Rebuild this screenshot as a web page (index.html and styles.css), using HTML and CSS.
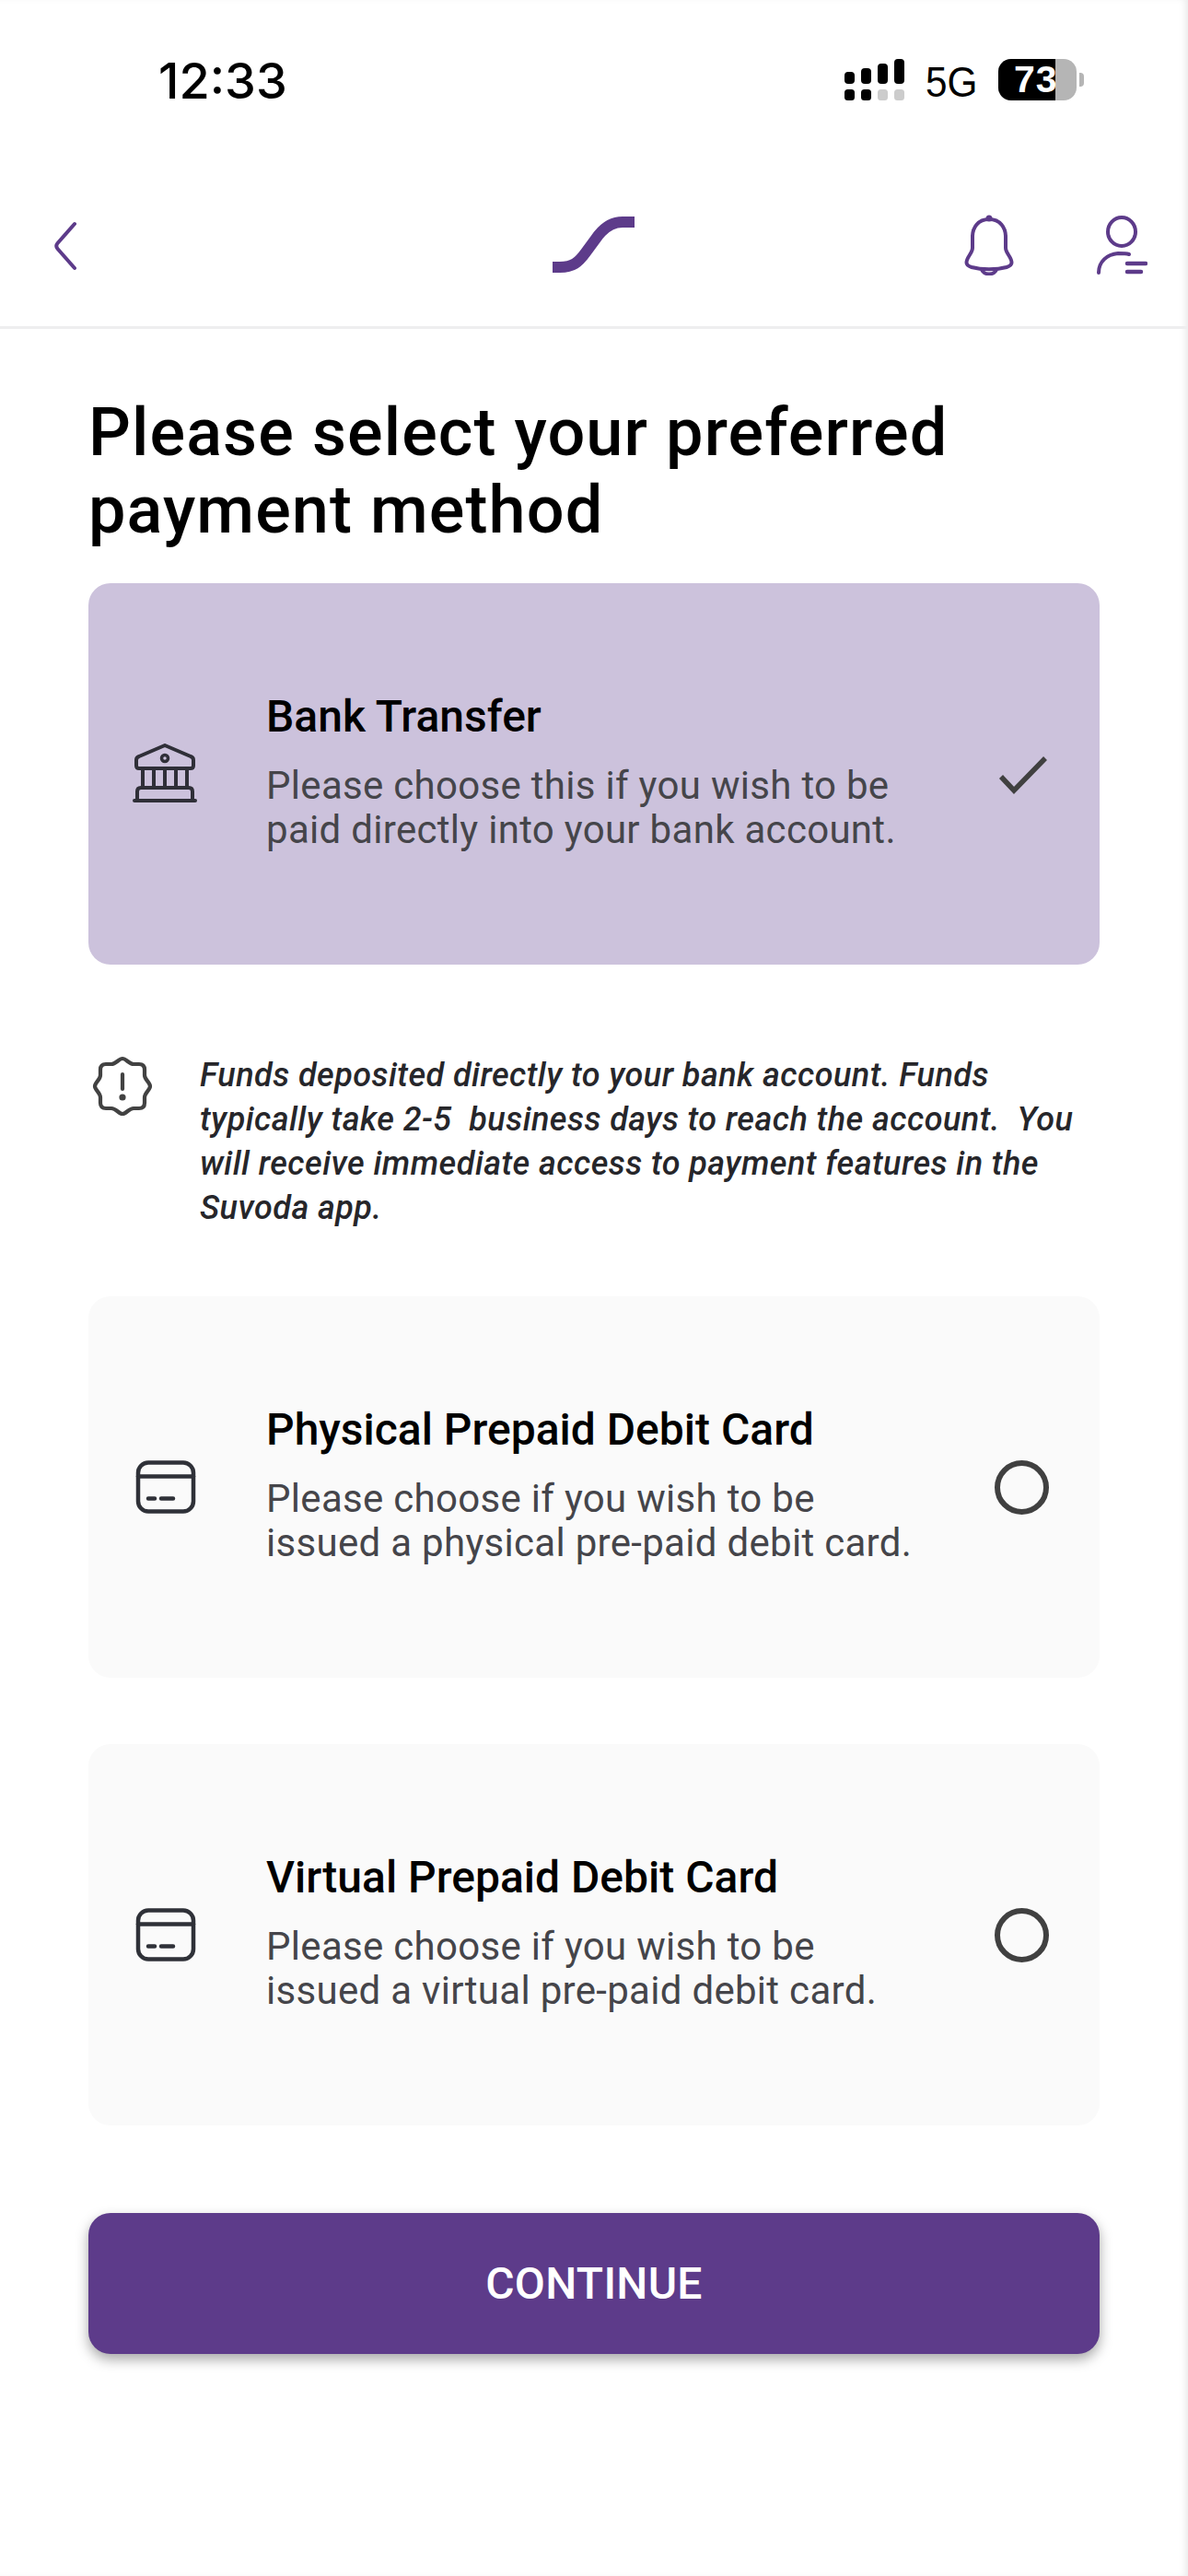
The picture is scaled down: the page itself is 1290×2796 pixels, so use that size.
FILE: index.html
```html
<!DOCTYPE html>
<html lang="en">
<head>
<meta charset="utf-8">
<title>Payment method</title>
<link rel="stylesheet" href="styles.css">
</head>
<body>
<div class="screen">
  <div class="statusbar">
    <span class="time">12:33</span>
    <div class="status-right">
      <svg class="signal" width="65" height="45" viewBox="0 0 65 45">
        <rect x="0" y="14" width="11" height="13" rx="4" fill="#000"/>
        <rect x="18" y="10" width="11" height="17" rx="4" fill="#000"/>
        <rect x="36" y="5" width="11" height="22" rx="4" fill="#000"/>
        <rect x="54" y="0" width="11" height="27" rx="4" fill="#000"/>
        <rect x="0" y="33" width="11" height="12" rx="3.500" fill="#000"/>
        <rect x="18" y="33" width="11" height="12" rx="3.500" fill="#000"/>
        <rect x="36" y="33" width="11" height="12" rx="3.500" fill="#ccc"/>
        <rect x="54" y="33" width="11" height="12" rx="3.500" fill="#ccc"/>
      </svg>
      <span class="net">5G</span>
      <div class="battery">
        <div class="battery-body"><span class="battery-fill"></span><span class="battery-text">73</span></div>
        <span class="battery-cap"></span>
      </div>
    </div>
  </div>
  <header class="nav">
    <svg class="back" width="30" height="60" viewBox="0 0 30 60"><path d="M26 6 L7.500 27 Q5 30 7.500 33 L26 54" fill="none" stroke="#5d3b8a" stroke-width="4" stroke-linecap="round"/></svg>
    <svg class="logo" width="90" height="62" viewBox="0 0 90 62"><path d="M0 55 H8 C22 55 28 50 36 39 L50 20 C58 10 66 6 76 6 H89" fill="none" stroke="#5d3b8a" stroke-width="12"/></svg>
    <div class="nav-actions">
      <svg class="bell" width="56" height="66" viewBox="0 0 56 66"><path d="M28 5 C16 5 10 14 10 24 V36 C10 42 3.500 46 3.500 52 C3.500 55 6 56 9 57 C20 60 36 60 47 57 C50 56 52.500 55 52.500 52 C52.500 46 46 42 46 36 V24 C46 14 40 5 28 5 Z" fill="none" stroke="#5d3b8a" stroke-width="4" stroke-linejoin="round"/><path d="M19.500 58 C21 66.500 35 66.500 36.500 58" fill="none" stroke="#5d3b8a" stroke-width="4"/><circle cx="28" cy="4" r="3.500" fill="#5d3b8a"/></svg>
      <svg class="person" width="56" height="66" viewBox="0 0 56 66"><ellipse cx="28" cy="18.500" rx="15" ry="15.500" fill="none" stroke="#5d3b8a" stroke-width="4"/><path d="M3 63 C3 51 12 43 24 42 C29 42 33 42 36 43" fill="none" stroke="#5d3b8a" stroke-width="4" stroke-linecap="round"/><path d="M34 53 H54 M34 62 H49" fill="none" stroke="#5d3b8a" stroke-width="4.500" stroke-linecap="round"/></svg>
    </div>
  </header>
  <main class="content">
    <h1 class="title">Please select your preferred payment method</h1>
    <section class="option option-selected">
      <svg class="opt-icon" width="70" height="66" viewBox="0 0 70 66" fill="none" stroke="#2f2f38" stroke-width="4" stroke-linejoin="round" stroke-linecap="round">
        <path d="M35 2 L63 14 Q66 15 66 18 V24 Q66 27 63 27 H7 Q4 27 4 24 V18 Q4 15 7 14 Z"/>
        <circle cx="35" cy="16" r="3.500" stroke-width="3.500"/>
        <path d="M11 27 V48 M23 27 V48 M35 27 V48 M47 27 V48 M59 27 V48"/>
        <path d="M9 48 H61 Q65 48 65 52 V62 H5 V52 Q5 48 9 48 Z"/>
        <path d="M2 62 H68"/>
      </svg>
      <div class="opt-text">
        <h2 class="opt-title">Bank Transfer</h2>
        <p class="opt-desc">Please choose this if you wish to be<br>paid directly into your bank account.</p>
      </div>
      <svg class="check" width="56" height="44" viewBox="0 0 56 44"><path d="M3 25 L17 40 L51 5" fill="none" stroke="#404040" stroke-width="5.500"/></svg>
    </section>
    <div class="notice">
      <svg class="notice-icon" width="66" height="66" viewBox="0 0 66 66" fill="none" stroke="#424242" stroke-width="4.200" stroke-linecap="round" stroke-linejoin="round">
        <path d="M33 3 C37 3 40 9 45 9 H51 Q57 9 57 15 V21 C57 26 63 29 63 33 C63 37 57 40 57 45 V51 Q57 57 51 57 H45 C40 57 37 63 33 63 C29 63 26 57 21 57 H15 Q9 57 9 51 V45 C9 40 3 37 3 33 C3 29 9 26 9 21 V15 Q9 9 15 9 H21 C26 9 29 3 33 3 Z"/>
        <path d="M33 20 V36"/>
        <circle cx="33" cy="45" r="1.500" fill="#424242"/>
      </svg>
      <p class="notice-text">Funds deposited directly to your bank account. Funds typically take 2-5&nbsp; business days to reach the account.&nbsp; You will receive immediate access to payment features in the Suvoda app.</p>
    </div>
    <section class="option">
      <svg class="opt-icon" width="70" height="58" viewBox="0 0 70 58" fill="none" stroke="#2f3138" stroke-width="4.500" stroke-linecap="round">
        <rect x="6" y="2.500" width="60" height="53" rx="11"/>
        <path d="M6 17.500 H66"/>
        <path d="M17 41.500 H24 M31 41.500 H44"/>
      </svg>
      <div class="opt-text">
        <h2 class="opt-title">Physical Prepaid Debit Card</h2>
        <p class="opt-desc">Please choose if you wish to be<br>issued a physical pre-paid debit card.</p>
      </div>
      <span class="radio"></span>
    </section>
    <section class="option">
      <svg class="opt-icon" width="70" height="58" viewBox="0 0 70 58" fill="none" stroke="#2f3138" stroke-width="4.500" stroke-linecap="round">
        <rect x="6" y="2.500" width="60" height="53" rx="11"/>
        <path d="M6 17.500 H66"/>
        <path d="M17 41.500 H24 M31 41.500 H44"/>
      </svg>
      <div class="opt-text">
        <h2 class="opt-title">Virtual Prepaid Debit Card</h2>
        <p class="opt-desc">Please choose if you wish to be<br>issued a virtual pre-paid debit card.</p>
      </div>
      <span class="radio"></span>
    </section>
    <button class="continue" type="button">CONTINUE</button>
  </main>
</div>
</body>
</html>
```
FILE: styles.css
```css
* { box-sizing: border-box; }
html, body { margin: 0; padding: 0; background: #fff; }
body { font-family: Roboto, "Liberation Sans", sans-serif; }
.screen { width: 1290px; height: 2796px; overflow: hidden; background: #fff; box-shadow: inset -6px 0 8px -4px rgba(0,0,0,0.1); }

.statusbar { height: 176px; padding: 62px 113px 0 172px; display: flex; justify-content: space-between; align-items: flex-start; }
.time { font-family: Inter, "Liberation Sans", sans-serif; font-size: 54px; font-weight: 500; line-height: 52px; color: #000; }
.status-right { display: flex; align-items: flex-start; padding-top: 2px; }
.signal { margin-right: 23px; }
.net { display: block; width: 56px; margin-right: 23px; margin-top: 2px; font-family: "Liberation Sans", sans-serif; font-size: 46px; line-height: 46px; color: #000; white-space: nowrap; transform: scaleX(0.92); transform-origin: left center; }
.battery { display: flex; align-items: center; gap: 3px; }
.battery-body { position: relative; width: 85px; height: 45px; border-radius: 14px; overflow: hidden; background: #b5b5b5; }
.battery-fill { position: absolute; left: 0; top: 0; bottom: 0; width: 62px; background: #000; }
.battery-text { position: relative; display: block; font-family: "Liberation Sans", sans-serif; font-weight: 700; font-size: 41px; line-height: 45px; letter-spacing: 1px; color: #fff; padding-left: 17px; }
.battery-cap { width: 5px; height: 15px; background: #b5b5b5; border-radius: 0 4px 4px 0; }

.nav { height: 181px; border-bottom: 3px solid #eeeeef; padding: 60px 44px 0 55px; display: flex; align-items: flex-start; }
.back { flex: none; margin-top: 1px; }
.logo { flex: none; margin: -1px 0 0 515px; }
.nav-actions { display: flex; gap: 88px; margin: -3px 0 0 auto; }

.content { padding: 0 96px; }
.title { margin: 71px 0 0; font-size: 72px; font-weight: 500; line-height: 84px; letter-spacing: 1.1px; color: #000; }

.option { height: 414px; margin-top: 72px; border-radius: 24px; background: #fafafa; display: flex; align-items: center; padding: 0 52px 0 48px; }
.option-selected { background: #ccc2dc; margin-top: 37px; }
.opt-icon { flex: none; }
.opt-text { flex: 1; margin-left: 75px; padding-bottom: 6px; }
.opt-title { margin: 0 0 23px; font-size: 48px; font-weight: 500; line-height: 56px; letter-spacing: 0; color: #000; }
.opt-desc { margin: 0; font-size: 42px; font-weight: 400; line-height: 48px; letter-spacing: 0.3px; color: #45454a; }
.check { flex: none; margin-right: 2px; }
.radio { flex: none; width: 59px; height: 59px; margin: 0 3px 0 0; border: 6px solid #404040; border-radius: 50%; }

.notice { display: flex; align-items: flex-start; margin: 96px 0 0 4px; }
.notice-icon { flex: none; margin-top: 3px; }
.notice-text { margin: 0 0 0 51px; font-size: 36px; font-style: italic; font-weight: 500; line-height: 48px; letter-spacing: 0.450px; color: #26262a; }

.continue { display: block; width: 100%; height: 153px; margin-top: 95px; border: 0; border-radius: 24px; background: #5d3b8a; color: #fff; font-family: inherit; font-size: 48px; font-weight: 500; letter-spacing: 0.300px; box-shadow: 0 6px 14px rgba(0,0,0,0.35); }
```
